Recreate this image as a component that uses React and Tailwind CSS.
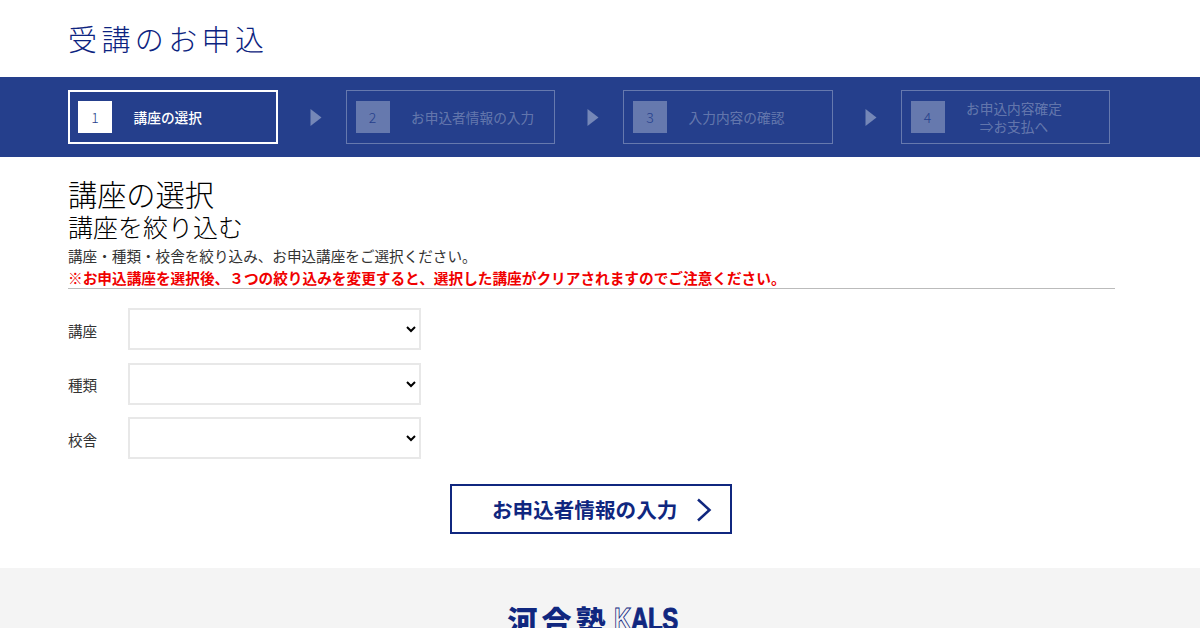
const jp = { fontFamily: '"Noto Sans CJK JP", sans-serif' }

const steps = [
  { no: 1, label: '講座の選択', active: true },
  { no: 2, label: 'お申込者情報の入力' },
  { no: 3, label: '入力内容の確認' },
  { no: 4, label: 'お申込内容確定', sub: '⇒お支払へ' },
]

const filters = ['講座', '種類', '校舎']

function Step({ no, label, sub, active }) {
  return (
    <div
      className={[
        'flex h-[54px] w-[209.5px] shrink-0 items-center',
        active ? 'border-2 border-white pl-[8px]' : 'border border-white/30 pl-[9px]',
      ].join(' ')}
    >
      <div
        className={[
          'flex h-[32px] w-[34px] shrink-0 items-center justify-center text-[14px] font-light text-[#253f8c]',
          active ? 'bg-white' : 'bg-white/30',
        ].join(' ')}
      >
        {no}
      </div>
      <div
        className={[
          'ml-[21.5px] text-center text-[13.7px] leading-[18px]',
          active ? 'font-medium text-white' : 'text-white/30',
        ].join(' ')}
      >
        <div>{label}</div>
        {sub ? <div>{sub}</div> : null}
      </div>
    </div>
  )
}

function Arrow() {
  return (
    <div className="flex w-[68px] shrink-0 justify-center pl-[8px]">
      <svg width="12" height="17" viewBox="0 0 12 17">
        <path d="M0.5 0 L11.5 8.5 L0.5 17 Z" fill="#7587b7" />
      </svg>
    </div>
  )
}

export default function App() {
  return (
    <div className="h-[628px] overflow-hidden bg-white" style={jp}>
      <header className="h-[77px] pl-[68px] pt-[17px]">
        <h1 className="text-[29px] font-light leading-[43px] tracking-[4.4px] text-[#0c2380]">
          受講のお申込
        </h1>
      </header>

      <nav className="flex h-[80px] items-center bg-[#253f8c] pl-[68px]">
        {steps.map((s, i) => (
          <div key={s.no} className="flex items-center">
            <Step {...s} />
            {i < steps.length - 1 ? <Arrow /> : null}
          </div>
        ))}
      </nav>

      <main className="pl-[68px] pr-[85px] pt-[20px]">
        <h2 className="text-[29.2px] leading-[33px] font-light text-black">講座の選択</h2>
        <h3 className="text-[25px] leading-[33px] font-light text-black">講座を絞り込む</h3>
        <p className="text-[14.6px] leading-[25px] text-[#333]">
          講座・種類・校舎を絞り込み、お申込講座をご選択ください。
        </p>
        <p className="text-[14.67px] font-bold leading-[20px] text-[#f00000]">
          ※お申込講座を選択後、３つの絞り込みを変更すると、選択した講座がクリアされますのでご注意ください。
        </p>
        <div className="border-t border-[#bbb]" />

        <div className="mt-[19px] flex flex-col gap-[12.5px]">
          {filters.map((f) => (
            <div key={f} className="flex items-center">
              <label className="w-[60px] pt-[3px] text-[14.6px] text-[#333]">{f}</label>
              <select className="h-[42px] w-[293px] border-2 border-[#e8e8e8] bg-white" />
            </div>
          ))}
        </div>

        <div className="mt-[25px] flex justify-center">
          <button className="relative -ml-[1px] flex h-[50px] w-[282px] items-center border-2 border-[#10277f] bg-white pl-[40px] text-[20.6px] font-bold text-[#10277f]">
            お申込者情報の入力
            <svg className="absolute right-[18px] top-[12px]" width="16" height="24" viewBox="0 0 16 24" fill="none">
              <path d="M2 1.5 L13.5 12 L2 22.5" stroke="#10277f" strokeWidth="2.5" />
            </svg>
          </button>
        </div>
      </main>

      <footer className="mt-[34px] flex h-[60px] justify-center bg-[#f4f4f4] pr-[17px] pt-[33px]">
        <div className="flex h-[36px] items-center text-[#10277f]">
          <span className="w-[106px] text-[30px] font-black leading-[36px] tracking-[4px]">河合塾</span>
          <span
            className="w-[62px] origin-left scale-x-[0.75] text-[32px] font-bold leading-[36px] tracking-[-0.5px] whitespace-nowrap [-webkit-text-stroke:1px_#10277f]"
            style={{ fontFamily: '"Liberation Sans", sans-serif' }}
          >
            <span className="text-transparent">K</span>ALS
          </span>
        </div>
      </footer>
    </div>
  )
}
